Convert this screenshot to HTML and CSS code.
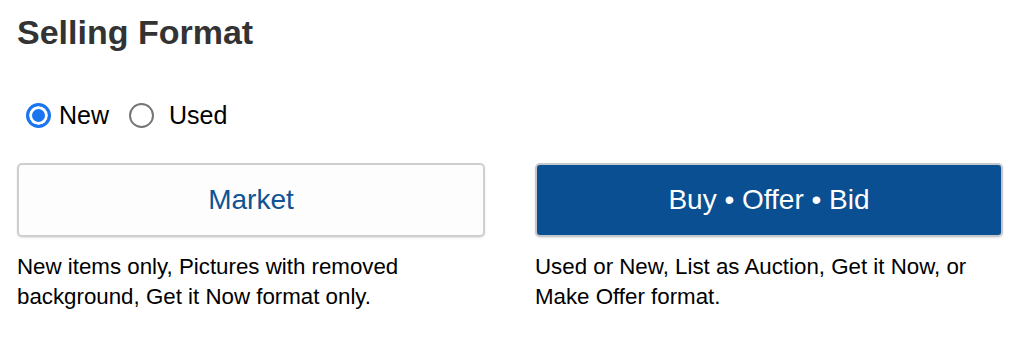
FILE: index.html
```html
<!DOCTYPE html>
<html>
<head>
<meta charset="utf-8">
<link rel="stylesheet" href="styles.css">
</head>
<body>
<div class="page">
  <h1 class="title">Selling Format</h1>
  <div class="radios">
    <label class="radio"><span class="dot checked"></span><span class="rlabel">New</span></label>
    <label class="radio radio-used"><span class="dot"></span><span class="rlabel">Used</span></label>
  </div>
  <div class="options">
    <div class="option">
      <div class="btn btn-light">Market</div>
      <p class="desc">New items only, Pictures with removed background, Get it Now format only.</p>
    </div>
    <div class="option">
      <div class="btn btn-dark">Buy • Offer • Bid</div>
      <p class="desc">Used or New, List as Auction, Get it Now, or Make Offer format.</p>
    </div>
  </div>
</div>
</body>
</html>
```
FILE: styles.css
```css
html, body {
  margin: 0;
  padding: 0;
  background: #fff;
}
body {
  font-family: "Liberation Sans", Arial, sans-serif;
  color: #000;
}
.page {
  padding: 0 17px;
}
.title {
  margin: 0;
  padding-top: 12px;
  font-size: 34px;
  line-height: 40px;
  font-weight: bold;
  color: #333;
}
.radios {
  display: flex;
  align-items: center;
  margin-top: 49px;
  padding-left: 9px;
  gap: 20px;
  height: 28px;
}
.radio {
  display: flex;
  align-items: center;
  gap: 8px;
}
.radio-used {
  gap: 15px;
}
.dot {
  width: 25px;
  height: 25px;
  box-sizing: border-box;
  border-radius: 50%;
  border: 2px solid #767676;
  background: #fff;
}
.dot.checked {
  border: 3px solid #1a76f0;
  box-shadow: inset 0 0 0 3px #fff;
  background: #1a76f0;
}
.rlabel {
  font-size: 25px;
  line-height: 28px;
}
.options {
  display: grid;
  grid-template-columns: 1fr 1fr;
  column-gap: 50px;
  margin-top: 34px;
}
.btn {
  height: 74px;
  box-sizing: border-box;
  border-radius: 5px;
  display: flex;
  align-items: center;
  justify-content: center;
  font-size: 28px;
  box-shadow: 0 1px 2px rgba(0,0,0,0.12);
}
.btn-light {
  border: 2px solid #cfcfcf;
  background: #fdfdfd;
  color: #0e5393;
}
.btn-dark {
  border: 2px solid #c4c8cc;
  background: #0a4f91;
  color: #fff;
}
.desc {
  margin: 15px 0 0;
  font-size: 22.3px;
  line-height: 30px;
}
```
